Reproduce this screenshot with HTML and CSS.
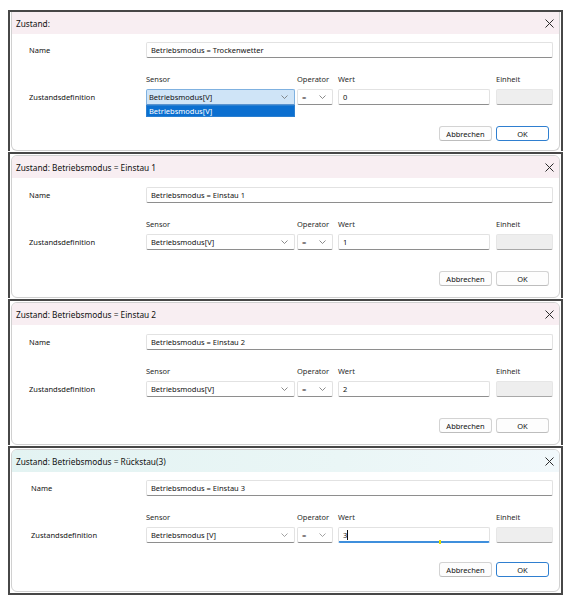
FILE: index.html
```html
<!DOCTYPE html>
<html lang="de">
<head>
<meta charset="utf-8">
<title>Zustände</title>
<link rel="stylesheet" href="styles.css">
</head>
<body>
<div class="stack">

  <!-- Zustand 1: Trockenwetter, Sensor-Auswahl geöffnet -->
  <section class="panel p1">
    <div class="dialog">
      <header class="titlebar">
        <span class="title">Zustand:</span>
        <svg class="close" width="9" height="9" viewBox="0 0 9 9"><path d="M0.5 0.5L8.5 8.5M8.5 0.5L0.5 8.5" stroke="#2b2b2b" stroke-width="1"/></svg>
      </header>
      <div class="body">
        <div class="form">
          <div class="lbl">Name</div>
          <div class="field name">Betriebsmodus = Trockenwetter</div>
          <div class="hdr c-sensor">Sensor</div>
          <div class="hdr c-op">Operator</div>
          <div class="hdr c-wert">Wert</div>
          <div class="hdr c-unit">Einheit</div>
          <div class="lbl">Zustandsdefinition</div>
          <div class="field combo c-sensor open">
            <span>Betriebsmodus[V]</span>
            <svg class="chev" width="7" height="4" viewBox="0 0 7 4"><path d="M0.5 0.5L3.5 3.5L6.5 0.5" fill="none" stroke="#6d6d6d" stroke-width="0.8"/></svg>
            <div class="dropdown">Betriebsmodus[V]</div>
          </div>
          <div class="field combo c-op">
            <span>=</span>
            <svg class="chev" width="7" height="4" viewBox="0 0 7 4"><path d="M0.5 0.5L3.5 3.5L6.5 0.5" fill="none" stroke="#6d6d6d" stroke-width="0.8"/></svg>
          </div>
          <div class="field c-wert">0</div>
          <div class="field unit c-unit"></div>
        </div>
        <div class="buttons">
          <div class="btn">Abbrechen</div>
          <div class="btn primary">OK</div>
        </div>
      </div>
    </div>
  </section>

  <!-- Zustand 2: Einstau 1 -->
  <section class="panel">
    <div class="dialog">
      <header class="titlebar">
        <span class="title">Zustand: Betriebsmodus = Einstau 1</span>
        <svg class="close" width="9" height="9" viewBox="0 0 9 9"><path d="M0.5 0.5L8.5 8.5M8.5 0.5L0.5 8.5" stroke="#2b2b2b" stroke-width="1"/></svg>
      </header>
      <div class="body">
        <div class="form">
          <div class="lbl">Name</div>
          <div class="field name">Betriebsmodus = Einstau 1</div>
          <div class="hdr c-sensor">Sensor</div>
          <div class="hdr c-op">Operator</div>
          <div class="hdr c-wert">Wert</div>
          <div class="hdr c-unit">Einheit</div>
          <div class="lbl">Zustandsdefinition</div>
          <div class="field combo c-sensor">
            <span>Betriebsmodus[V]</span>
            <svg class="chev" width="7" height="4" viewBox="0 0 7 4"><path d="M0.5 0.5L3.5 3.5L6.5 0.5" fill="none" stroke="#6d6d6d" stroke-width="0.8"/></svg>
          </div>
          <div class="field combo c-op">
            <span>=</span>
            <svg class="chev" width="7" height="4" viewBox="0 0 7 4"><path d="M0.5 0.5L3.5 3.5L6.5 0.5" fill="none" stroke="#6d6d6d" stroke-width="0.8"/></svg>
          </div>
          <div class="field c-wert">1</div>
          <div class="field unit c-unit"></div>
        </div>
        <div class="buttons">
          <div class="btn">Abbrechen</div>
          <div class="btn">OK</div>
        </div>
      </div>
    </div>
  </section>

  <!-- Zustand 3: Einstau 2 -->
  <section class="panel">
    <div class="dialog">
      <header class="titlebar">
        <span class="title">Zustand: Betriebsmodus = Einstau 2</span>
        <svg class="close" width="9" height="9" viewBox="0 0 9 9"><path d="M0.5 0.5L8.5 8.5M8.5 0.5L0.5 8.5" stroke="#2b2b2b" stroke-width="1"/></svg>
      </header>
      <div class="body">
        <div class="form">
          <div class="lbl">Name</div>
          <div class="field name">Betriebsmodus = Einstau 2</div>
          <div class="hdr c-sensor">Sensor</div>
          <div class="hdr c-op">Operator</div>
          <div class="hdr c-wert">Wert</div>
          <div class="hdr c-unit">Einheit</div>
          <div class="lbl">Zustandsdefinition</div>
          <div class="field combo c-sensor">
            <span>Betriebsmodus[V]</span>
            <svg class="chev" width="7" height="4" viewBox="0 0 7 4"><path d="M0.5 0.5L3.5 3.5L6.5 0.5" fill="none" stroke="#6d6d6d" stroke-width="0.8"/></svg>
          </div>
          <div class="field combo c-op">
            <span>=</span>
            <svg class="chev" width="7" height="4" viewBox="0 0 7 4"><path d="M0.5 0.5L3.5 3.5L6.5 0.5" fill="none" stroke="#6d6d6d" stroke-width="0.8"/></svg>
          </div>
          <div class="field c-wert">2</div>
          <div class="field unit c-unit"></div>
        </div>
        <div class="buttons">
          <div class="btn">Abbrechen</div>
          <div class="btn">OK</div>
        </div>
      </div>
    </div>
  </section>

  <!-- Zustand 4: Rückstau(3), Wert-Feld aktiv -->
  <section class="panel p4">
    <div class="dialog">
      <header class="titlebar">
        <span class="title">Zustand: Betriebsmodus = Rückstau(3)</span>
        <svg class="close" width="9" height="9" viewBox="0 0 9 9"><path d="M0.5 0.5L8.5 8.5M8.5 0.5L0.5 8.5" stroke="#2b2b2b" stroke-width="1"/></svg>
      </header>
      <div class="body">
        <div class="form">
          <div class="lbl">Name</div>
          <div class="field name">Betriebsmodus = Einstau 3</div>
          <div class="hdr c-sensor">Sensor</div>
          <div class="hdr c-op">Operator</div>
          <div class="hdr c-wert">Wert</div>
          <div class="hdr c-unit">Einheit</div>
          <div class="lbl">Zustandsdefinition</div>
          <div class="field combo c-sensor">
            <span>Betriebsmodus [V]</span>
            <svg class="chev" width="7" height="4" viewBox="0 0 7 4"><path d="M0.5 0.5L3.5 3.5L6.5 0.5" fill="none" stroke="#8a8a8a" stroke-width="0.8"/></svg>
          </div>
          <div class="field combo c-op">
            <span>=</span>
            <svg class="chev" width="7" height="4" viewBox="0 0 7 4"><path d="M0.5 0.5L3.5 3.5L6.5 0.5" fill="none" stroke="#8a8a8a" stroke-width="0.8"/></svg>
          </div>
          <div class="field c-wert focused"><span>3</span><i class="caret"></i><i class="marker"></i></div>
          <div class="field unit c-unit"></div>
        </div>
        <div class="buttons">
          <div class="btn">Abbrechen</div>
          <div class="btn primary">OK</div>
        </div>
      </div>
    </div>
  </section>

</div>
</body>
</html>
```
FILE: styles.css
```css
* {
  box-sizing: border-box;
}

body {
  margin: 0;
  background: #ffffff;
  font-family: "Noto Sans", "Open Sans", sans-serif;
  font-size: 7.5px;
  color: #111111;
}

.stack {
  margin: 10px 0 0 8px;
  width: 555px;
}

/* dark frame around each captured window */
.panel {
  border: 2px solid #474747;
  border-bottom: none;
}

.panel:last-child {
  border-bottom: 2px solid #474747;
}

.dialog {
  margin: 1px;
  border: 1px solid #d0d0d0;
  border-radius: 6px;
  overflow: hidden;
  background: #ffffff;
}

.p1 .dialog {
  margin-top: 0;
  border-top: none;
  border-radius: 0 0 6px 6px;
}

.titlebar {
  height: 22px;
  background: #f8eef2;
  display: flex;
  align-items: center;
  justify-content: space-between;
  padding: 0 5px 0 4px;
}

.p4 .titlebar {
  background: linear-gradient(90deg, #e3f3f2 0%, #eaf6f6 60%, #f1f8fb 100%);
}

.title {
  font-size: 8.3px;
  color: #111111;
}

.close {
  display: block;
}

.body {
  padding: 9px 6px 11px 16px;
}

.p1 .body {
  padding-top: 8px;
  padding-bottom: 9px;
}

.p4 .body {
  padding-top: 8px;
  padding-bottom: 14px;
}

.p4 .buttons {
  margin-top: 19px;
}

.form {
  display: grid;
  grid-template-columns: 118px 149px 2px 36px 5px 152px 6px 57px;
  align-items: center;
}

.lbl {
  grid-column: 1;
  padding-left: 1px;
}

.p4 .lbl {
  padding-left: 3px;
}

.field {
  height: 16px;
  border: 1px solid #e2e2e2;
  border-bottom-color: #8e8e8e;
  border-radius: 2px;
  background: #ffffff;
  padding: 0 4px;
  display: flex;
  align-items: center;
  position: relative;
  white-space: nowrap;
}

.field.name {
  grid-column: 2 / -1;
}

.hdr {
  margin: 15px 0 4px;
  height: 12px;
  line-height: 12px;
  color: #2a2a2a;
}

.c-sensor { grid-column: 2; }
.c-op { grid-column: 4; }
.c-wert { grid-column: 6; }
.c-unit { grid-column: 8; }

.combo {
  justify-content: space-between;
  padding-right: 6px;
}

.combo.c-op {
  padding-left: 4px;
}

.combo.open {
  background: #cfe4f7;
  border-color: #7fb1e0;
  border-bottom-color: #5a93cf;
  border-radius: 2px 2px 0 0;
  padding-left: 2px;
}

/* opened sensor list */
.dropdown {
  position: absolute;
  left: -1px;
  right: -1px;
  top: 15px;
  height: 12px;
  background: #0b6fd0;
  border: 1px solid #2a7fd0;
  color: #ffffff;
  padding-left: 2px;
  line-height: 10px;
}

.field.unit {
  background: #eeeeee;
  border-color: #e6e6e6;
  border-bottom-color: #a8a8a8;
}

.field.focused {
  border-bottom: 2px solid #3f8fdc;
  padding-top: 1px;
}

.caret {
  display: block;
  width: 1px;
  height: 10px;
  background: #111111;
}

.marker {
  position: absolute;
  left: 100px;
  bottom: -3px;
  width: 2px;
  height: 4px;
  background: #e2e000;
}

.buttons {
  display: flex;
  justify-content: flex-end;
  gap: 4px;
  margin-top: 21px;
  padding-right: 4px;
}

.btn {
  width: 53px;
  height: 15px;
  border: 1px solid #d3d3d3;
  border-bottom-color: #bdbdbd;
  border-radius: 3px;
  background: #fdfdfd;
  display: flex;
  align-items: center;
  justify-content: center;
  color: #111111;
}

.btn.primary {
  border-color: #2f7fd0;
  background: #ffffff;
}
```
